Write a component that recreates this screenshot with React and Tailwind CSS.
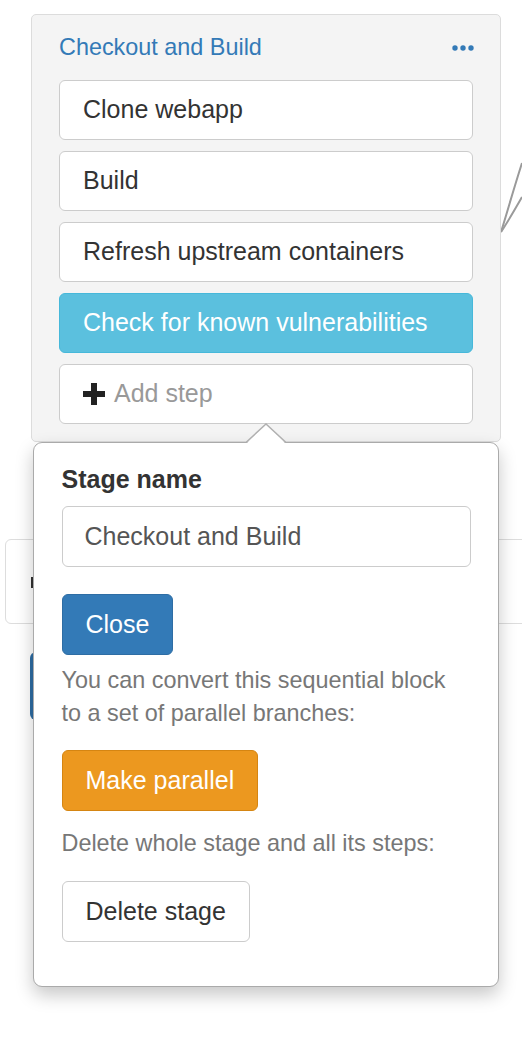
import React from 'react';

const font = { fontFamily: '"Liberation Sans", Arial, Helvetica, sans-serif' };

const steps = ['Clone webapp', 'Build', 'Refresh upstream containers'];

function Dots() {
  return (
    <svg width="22" height="6" viewBox="0 0 22 6">
      <circle cx="3" cy="3" r="2.7" fill="#337ab7" />
      <circle cx="11" cy="3" r="2.7" fill="#337ab7" />
      <circle cx="19" cy="3" r="2.7" fill="#337ab7" />
    </svg>
  );
}

function Plus() {
  return (
    <svg width="22" height="22" viewBox="0 0 22 22">
      <path d="M8 0h6v8h8v6h-8v8H8v-8H0V8h8z" fill="#222" />
    </svg>
  );
}

export default function App() {
  return (
    <div className="relative w-[522px] h-[1056px] overflow-hidden bg-white text-[#333]" style={font}>
      {/* background canvas bits */}
      <svg className="absolute left-[495px] top-[155px]" width="27" height="85" viewBox="0 0 27 85">
        <path d="M27 8 C18 36, 12 58, 6 77" stroke="#9a9a9a" strokeWidth="2" fill="none" />
        <path d="M27 42 C19 56, 12 68, 6 77" stroke="#9a9a9a" strokeWidth="2" fill="none" />
      </svg>
      <div className="absolute left-[5px] top-[539px] w-[540px] h-[85px] rounded-[6px] border-[1.5px] border-[#ddd] bg-white" />
      <div className="absolute left-[31px] top-[577px] w-[3px] h-[11px] bg-[#333]" />
      <div className="absolute left-[30px] top-[652px] w-[20px] h-[68px] rounded-l-[6px] bg-[#2e6da4]" />

      <div className="relative z-10 pt-[14px]">
        {/* stage card */}
        <div className="ml-[31px] w-[470px] rounded-[5px] border-[1.5px] border-[#dcdcdc] bg-[#f4f4f4] px-[27px] pt-[16px] pb-[17px]">
          <div className="flex h-[33px] items-center justify-between">
            <span className="text-[23.4px] leading-[33px] text-[#337ab7]">Checkout and Build</span>
            <span className="mr-[-1px] flex items-center"><Dots /></span>
          </div>
          <div className="mt-[16px] flex flex-col gap-[11px]">
            {steps.map(s => (
              <div key={s} className="flex h-[60px] items-center rounded-[6px] border-[1.5px] border-[#ccc] bg-white px-[23px] text-[25px] text-[#333]">
                {s}
              </div>
            ))}
            <div className="flex h-[60px] items-center rounded-[6px] border-[1.5px] border-[#46b8da] bg-[#5bc0de] px-[23px] text-[25px] text-white">
              Check for known vulnerabilities
            </div>
            <div className="flex h-[60px] items-center gap-[9px] rounded-[6px] border-[1.5px] border-[#ccc] bg-white px-[23px] text-[25px] text-[#999]">
              <Plus />
              <span>Add step</span>
            </div>
          </div>
        </div>

        {/* popover */}
        <div className="relative ml-[33px] w-[466px] rounded-[9px] border-[1.5px] border-[#aaa] bg-white px-[27.5px] pt-[18px] pb-[44px] shadow-[0_8px_18px_rgba(0,0,0,0.22)]">
          <svg className="absolute left-[212px] top-[-20px]" width="40" height="21" viewBox="0 0 40 21">
            <polygon points="1,20 20,1 39,20" fill="#fff" />
            <polyline points="0,19.5 20,1 40,19.5" fill="none" stroke="#b0b0b0" strokeWidth="1.5" />
          </svg>
          <div className="text-[25px] font-bold leading-[36px] text-[#333]">Stage name</div>
          <div className="mt-[9px] flex h-[61px] items-center rounded-[6px] border-[1.5px] border-[#ccc] px-[22px] text-[25px] text-[#555]">
            Checkout and Build
          </div>
          <button className="mt-[27px] flex h-[61px] items-center rounded-[6px] border-[1.5px] border-[#2e6da4] bg-[#337ab7] px-[23px] text-[25px] text-white">
            Close
          </button>
          <p className="mt-[9px] text-[23.4px] leading-[33px] text-[#777]">
            You can convert this sequential block<br />to a set of parallel branches:
          </p>
          <button className="mt-[20px] flex h-[61px] items-center rounded-[6px] border-[1.5px] border-[#d58512] bg-[#ec981f] px-[23px] text-[25px] text-white">
            Make parallel
          </button>
          <p className="mt-[16px] text-[23.4px] leading-[33px] text-[#777]">Delete whole stage and all its steps:</p>
          <button className="mt-[21px] flex h-[61px] items-center rounded-[6px] border-[1.5px] border-[#ccc] bg-white px-[23px] text-[25px] text-[#333]">
            Delete stage
          </button>
        </div>
      </div>
    </div>
  );
}
